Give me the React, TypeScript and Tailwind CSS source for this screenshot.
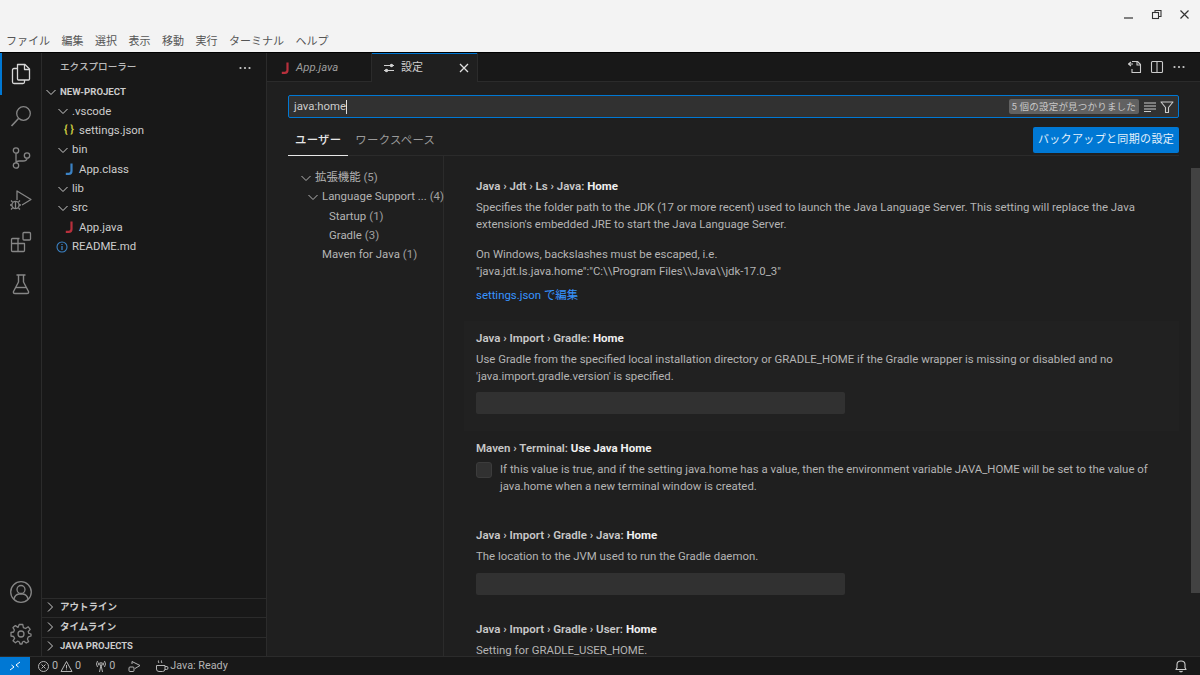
import React from "react";

const font = { fontFamily: '"Roboto","Noto Sans CJK JP",sans-serif' };

const Chevron = ({ open = true, className = "" }: { open?: boolean; className?: string }) => (
  <svg width="12" height="12" viewBox="0 0 12 12" fill="none" stroke="currentColor" strokeWidth="1" className={`shrink-0 ${className}`}>
    {open ? <path d="M1.5 4 L6 8.5 L10.5 4" /> : <path d="M4 1.5 L8.5 6 L4 10.5" />}
  </svg>
);

const JIcon = ({ color = "#b7303c" }: { color?: string }) => (
  <span className="inline-flex w-4 h-4 items-center justify-center shrink-0">
    <svg width="9" height="12" viewBox="0 0 9 12" fill="none" stroke={color} strokeWidth="2.2">
      <path d="M6.5 0.5 V8 Q6.5 10.8 3.8 10.8 H0.8" />
    </svg>
  </span>
);

const Row = ({ pad, icon, children }: { pad: string; icon?: React.ReactNode; children: React.ReactNode }) => (
  <div className={`flex items-center h-[19.4px] ${pad} text-[11.4px] text-[#cccccc]`}>
    {icon}
    <span>{children}</span>
  </div>
);

const Title = ({ pre, strong }: { pre: string; strong: string }) => (
  <div className="text-[11.5px] leading-[17px] font-semibold text-[#c8c8c8] whitespace-nowrap">
    {pre} <span className="text-[#f0f0f0] font-bold">{strong}</span>
  </div>
);

const Desc = ({ children }: { children: React.ReactNode }) => (
  <div className="text-[11.4px] leading-[17px] text-[#b4b4b4] whitespace-nowrap">{children}</div>
);

const TextInput = ({ mt }: { mt: string }) => <div className={`${mt} w-[369px] h-[22px] rounded-[2px] bg-[#313131]`} />;

const Section = ({ label }: { label: string }) => (
  <div className="flex items-center h-[19.5px] pb-[1px] border-t border-[#2b2b2b] pl-[2px] text-[9.5px] font-bold text-[#cccccc]">
    <Chevron open={false} className="mr-[4px]" />
    <span>{label}</span>
  </div>
);

export default function App() {
  return (
    <div style={font} className="w-[1200px] h-[675px] overflow-hidden flex flex-col bg-[#1f1f1f]">
      {/* Title bar */}
      <div className="h-[53px] shrink-0 bg-[#f3f3f3] border-b border-black flex flex-col justify-between">
        <div className="flex justify-end items-center gap-[15px] pt-[8px] pr-[9px] text-[#333]">
          <svg width="13" height="13" viewBox="0 0 13 13" stroke="currentColor" fill="none"><path d="M2 10 H11" strokeWidth="1.2" /></svg>
          <svg width="13" height="13" viewBox="0 0 13 13" stroke="currentColor" fill="none" strokeWidth="1.1"><rect x="2.5" y="4.5" width="6" height="6" /><path d="M5 4 V2.5 H11 V8.5 H9" /></svg>
          <svg width="13" height="13" viewBox="0 0 13 13" stroke="currentColor" fill="none" strokeWidth="1.2"><path d="M2.5 2.5 L10.5 10.5 M10.5 2.5 L2.5 10.5" /></svg>
        </div>
        <div className="flex items-center gap-[11.5px] pl-[6px] pb-[2px] text-[11px] leading-[16px] text-[#555]">
          <span>ファイル</span><span>編集</span><span>選択</span><span>表示</span><span>移動</span><span>実行</span><span>ターミナル</span><span>ヘルプ</span>
        </div>
      </div>

      <div className="flex-1 min-h-0 flex">
        {/* Activity bar */}
        <div className="w-[42px] shrink-0 bg-[#181818] border-r border-[#2b2b2b] flex flex-col items-center text-[#868686]">
          <div className="relative w-full h-[42px] flex items-center justify-center text-[#d7d7d7]">
            <div className="absolute left-0 top-0 bottom-0 w-[2px] bg-[#0078d4]" />
            <svg width="24" height="24" viewBox="0 0 24 24" fill="none" stroke="currentColor" strokeWidth="1.3" strokeLinejoin="round">
              <path d="M8.5 2.5 H16 L20.5 7 V17 Q20.5 18 19.5 18 H9.5 Q8.5 18 8.5 17 Z" />
              <path d="M15.5 3 V7.5 H20" />
              <path d="M8.5 6.5 H5 Q3.5 6.5 3.5 8 V20 Q3.5 21.5 5 21.5 H14 Q15.5 21.5 15.5 20 V18" />
            </svg>
          </div>
          <div className="h-[42px] flex items-center justify-center">
            <svg width="24" height="24" viewBox="0 0 24 24" fill="none" stroke="currentColor" strokeWidth="1.3"><circle cx="14.5" cy="9.5" r="6.8" /><path d="M9.5 14.5 L2.5 22" strokeWidth="1.6" /></svg>
          </div>
          <div className="h-[42px] flex items-center justify-center">
            <svg width="24" height="24" viewBox="0 0 24 24" fill="none" stroke="currentColor" strokeWidth="1.3"><circle cx="7" cy="4.5" r="2.7" /><circle cx="7" cy="19.5" r="2.7" /><circle cx="18" cy="9.5" r="2.7" /><path d="M7 7.2 V16.8 M18 12.2 Q18 15 14 15 H10 Q7.5 15 7 17" /></svg>
          </div>
          <div className="h-[42px] flex items-center justify-center">
            <svg width="24" height="24" viewBox="0 0 24 24" fill="none" stroke="currentColor" strokeWidth="1.3" strokeLinejoin="round"><path d="M8 12 V3 L22 11.5 L13 17" /><circle cx="6.5" cy="17" r="3.6" /><path d="M6.5 13.5 V20.5 M3 17 H1 M12 17 H10 M3.5 14 L2 12.5 M9.5 14 L11 12.5 M3.5 20 L2 21.5 M9.5 20 L11 21.5" /></svg>
          </div>
          <div className="h-[42px] flex items-center justify-center">
            <svg width="24" height="24" viewBox="0 0 24 24" fill="none" stroke="currentColor" strokeWidth="1.3" strokeLinejoin="round"><path d="M10.5 8.5 H3.5 Q2.5 8.5 2.5 9.5 V20.5 Q2.5 21.5 3.5 21.5 H14.5 Q15.5 21.5 15.5 20.5 V13.5 H2.5 M9 13.5 V21.5" /><path d="M9 13.5 V9" /><rect x="14" y="2.5" width="7.5" height="7.5" rx="1" /></svg>
          </div>
          <div className="h-[42px] flex items-center justify-center">
            <svg width="24" height="24" viewBox="0 0 24 24" fill="none" stroke="currentColor" strokeWidth="1.4" strokeLinejoin="round"><path d="M7.5 3 H16.5 M9.5 3 V10 L4.5 19.5 Q4 21.5 6 21.5 H18 Q20 21.5 19.5 19.5 L14.5 10 V3" /><path d="M7 15.5 H17" /></svg>
          </div>
          <div className="flex-1" />
          <div className="h-[42px] flex items-center justify-center">
            <svg width="24" height="24" viewBox="0 0 24 24" fill="none" stroke="currentColor" strokeWidth="1.3"><circle cx="12" cy="12" r="10.3" /><circle cx="12" cy="9.5" r="4" /><path d="M5 19 Q6 14.5 10 14 H14 Q18 14.5 19 19" /></svg>
          </div>
          <div className="h-[42px] flex items-center justify-center">
            <svg width="24" height="24" viewBox="0 0 24 24" fill="none" stroke="currentColor" strokeWidth="1.3" strokeLinejoin="round"><circle cx="12" cy="12" r="3" /><path d="M10.2 2.5 H13.8 L14.4 5.6 L16.6 6.5 L19.2 4.8 L21.2 7.3 L19.2 9.6 L19.9 11.4 L22 12 V14 L19.4 14.8 L18.4 17 L19.6 19.6 L17.2 21 L15 19.2 L13.5 20 L13 22 H11 L10.4 20 L8.6 19.2 L6.4 20.8 L4 18.8 L5.6 16.4 L4.6 14.5 L2 14 V10.5 L4.6 10 L5.4 8 L4 5.6 L6.4 3.6 L9 5.4 Z" /></svg>
          </div>
          <div className="h-[1px]" />
        </div>

        {/* Sidebar */}
        <div className="w-[225px] shrink-0 bg-[#181818] border-r border-[#2b2b2b] flex flex-col">
          <div className="h-[29px] shrink-0 flex items-center justify-between pl-[18px] pr-[14px] text-[9.6px] font-medium text-[#bbbbbb]">
            <span>エクスプローラー</span>
            <svg width="14" height="14" viewBox="0 0 14 14" fill="#cccccc"><circle cx="2.5" cy="7" r="1.1" /><circle cx="7" cy="7" r="1.1" /><circle cx="11.5" cy="7" r="1.1" /></svg>
          </div>
          <div className="flex-1 min-h-0 text-[#cccccc]">
            <div className="flex items-center h-[19.4px] pl-[3px] text-[9.6px] font-bold"><Chevron className="mr-[3px]" /><span>NEW-PROJECT</span></div>
            <Row pad="pl-[15px]" icon={<Chevron className="mr-[3px]" />}>.vscode</Row>
            <Row pad="pl-[19px]" icon={<span className="w-[16px] h-4 mr-[2px] flex items-center justify-center text-[11px] font-bold text-[#cbcb41] whitespace-pre">{"{ }"}</span>}>settings.json</Row>
            <Row pad="pl-[15px]" icon={<Chevron className="mr-[3px]" />}>bin</Row>
            <Row pad="pl-[19px]" icon={<span className="mr-[2px] flex"><JIcon color="#3b82c4" /></span>}>App.class</Row>
            <Row pad="pl-[15px]" icon={<Chevron className="mr-[3px]" />}>lib</Row>
            <Row pad="pl-[15px]" icon={<Chevron className="mr-[3px]" />}>src</Row>
            <Row pad="pl-[19px]" icon={<span className="mr-[2px] flex"><JIcon /></span>}>App.java</Row>
            <Row pad="pl-[13px]" icon={
              <svg width="12" height="12" viewBox="0 0 12 12" fill="none" stroke="#3b82c4" className="mr-[4px] ml-[1px] shrink-0"><circle cx="6" cy="6" r="5" strokeWidth="1.1" /><path d="M6 5 V9 M6 3 V4" strokeWidth="1.3" /></svg>
            }>README.md</Row>
          </div>
          <Section label="アウトライン" />
          <Section label="タイムライン" />
          <Section label="JAVA PROJECTS" />
        </div>

        {/* Editor */}
        <div className="flex-1 min-w-0 flex flex-col bg-[#1f1f1f]">
          {/* Tabs */}
          <div className="h-[29px] shrink-0 bg-[#181818] flex items-stretch border-b border-[#2b2b2b]">
            <div className="w-[105px] flex items-center pl-[10px] pt-[1px] gap-[3px] border-r border-[#2b2b2b] text-[11.4px] italic text-[#9d9d9d]">
              <JIcon />
              <span>App.java</span>
            </div>
            <div className="relative w-[106px] -mb-px flex items-center pl-[10px] border-r border-[#2b2b2b] bg-[#1f1f1f] text-[11px] text-[#d0d0d0]">
              <div className="absolute left-0 right-0 top-0 h-[1px] bg-[#0078d4]" />
              <svg width="14" height="14" viewBox="0 0 14 14" fill="none" stroke="currentColor" strokeWidth="1.1" className="mr-[5px]"><path d="M2 4.5 H8 M11 4.5 H12 M2 9.5 H3 M6 9.5 H12" /><circle cx="9.5" cy="4.5" r="1.1" fill="currentColor" /><circle cx="4.5" cy="9.5" r="1.1" fill="currentColor" /></svg>
              <span className="pt-[2px]">設定</span>
              <svg width="12" height="12" viewBox="0 0 12 12" fill="none" stroke="#e0e0e0" strokeWidth="1.3" className="absolute right-[7px]"><path d="M2 2 L10 10 M10 2 L2 10" /></svg>
            </div>
            <div className="flex-1 flex items-center justify-end gap-[6px] pr-[13px] text-[#cccccc]">
              <svg width="16" height="16" viewBox="0 0 16 16" fill="none" stroke="currentColor" strokeWidth="1.1" strokeLinejoin="round"><path d="M5 2.5 H10.5 L13.5 5.5 V13.5 H5 V10" /><path d="M10 2.5 V6 H13.5" /><path d="M6 5 L2 5 M4 3 L1.5 5 L4 7" /></svg>
              <svg width="16" height="16" viewBox="0 0 16 16" fill="none" stroke="currentColor" strokeWidth="1.1"><rect x="2.5" y="2.5" width="11" height="11" rx="1" /><path d="M8 2.5 V13.5" /></svg>
              <svg width="16" height="16" viewBox="0 0 16 16" fill="currentColor"><circle cx="3.5" cy="8" r="1.1" /><circle cx="8" cy="8" r="1.1" /><circle cx="12.5" cy="8" r="1.1" /></svg>
            </div>
          </div>

          {/* Settings */}
          <div className="flex-1 min-h-0 relative overflow-hidden">
            <div className="pl-[21px] pr-[21px] pt-[13px]">
              <div className="h-[23px] rounded-[2px] border border-[#0078d4] bg-[#313131] flex items-center pl-[5px] pr-[4px]">
                <span className="text-[11.4px] text-[#cccccc]">java:home</span>
                <span className="w-px h-[14px] bg-[#e0e0e0]" />
                <span className="ml-auto px-[3px] h-[15px] rounded-[2px] bg-[#616161] text-[9.5px] leading-[15px] tracking-[0.2px] text-[#c8c8c8]">5 個の設定が見つかりました</span>
                <svg width="14" height="14" viewBox="0 0 14 14" fill="none" stroke="#cccccc" strokeWidth="1.1" className="ml-[4px]"><path d="M1 3 H13 M1 6 H13 M1 9 H13 M1 11.5 H8" /></svg>
                <svg width="14" height="14" viewBox="0 0 14 14" fill="none" stroke="#cccccc" strokeWidth="1.1" strokeLinejoin="round" className="ml-[3px]"><path d="M1 2 H13 L8.5 7.5 V12.5 H5.5 V7.5 Z" /></svg>
              </div>
              <div className="mt-[6px] h-[32px] relative flex items-start justify-between border-b border-[#2b2b2b]">
                <div className="flex text-[11.4px] tracking-[0.25px] pt-[7px]">
                  <div className="px-[7px] h-[25px] -mb-px border-b border-[#e7e7e7] text-[#e7e7e7] font-medium leading-[18px]">ユーザー</div>
                  <div className="px-[7px] text-[#9a9a9a] leading-[18px]">ワークスペース</div>
                </div>
                <div className="h-[26px] w-[146px] mt-[3px] rounded-[2px] bg-[#0078d4] text-white/90 text-[11px] tracking-[0.35px] flex items-center justify-center">バックアップと同期の設定</div>
              </div>
            </div>

            <div className="flex">
              {/* TOC */}
              <div className="w-[177px] shrink-0 h-[520px] border-r border-[#2b2b2b] pt-[12px] text-[11.4px] text-[#b4b4b4]">
                <div className="flex items-center h-[19.3px] pl-[33px]"><Chevron className="mr-[3px]" /><span>拡張機能 <span className="text-[#a0a0a0]">(5)</span></span></div>
                <div className="flex items-center h-[19.3px] pl-[40px] whitespace-nowrap"><Chevron className="mr-[3px]" /><span>Language Support ... <span className="text-[#a0a0a0]">(4)</span></span></div>
                <div className="flex items-center h-[19.3px] pl-[62px]">Startup <span className="ml-[3px] text-[#a0a0a0]">(1)</span></div>
                <div className="flex items-center h-[19.3px] pl-[62px]">Gradle <span className="ml-[3px] text-[#a0a0a0]">(3)</span></div>
                <div className="flex items-center h-[19.3px] pl-[55px]">Maven for Java <span className="ml-[3px] text-[#a0a0a0]">(1)</span></div>
              </div>
              {/* Settings list */}
              <div className="flex-1 min-w-0 pl-[20px] pr-[21px] h-[520px] overflow-hidden">
                <div className="px-[12px] pt-[22px] h-[165px]">
                  <Title pre="Java › Jdt › Ls › Java:" strong="Home" />
                  <div className="mt-[4px]">
                    <Desc>Specifies the folder path to the JDK (17 or more recent) used to launch the Java Language Server. This setting will replace the Java<br />extension's embedded JRE to start the Java Language Server.</Desc>
                    <div className="mt-[13px]"><Desc>On Windows, backslashes must be escaped, i.e.<br />"java.jdt.ls.java.home":"C:\\Program Files\\Java\\jdk-17.0_3"</Desc></div>
                  </div>
                  <div className="mt-[7px] text-[11.4px] leading-[17px] text-[#3794ff]">settings.json で編集</div>
                </div>
                <div className="px-[12px] pt-[9px] h-[110px] bg-[#212121]">
                  <Title pre="Java › Import › Gradle:" strong="Home" />
                  <div className="mt-[4px]"><Desc>Use Gradle from the specified local installation directory or GRADLE_HOME if the Gradle wrapper is missing or disabled and no<br />'java.import.gradle.version' is specified.</Desc></div>
                  <TextInput mt="mt-[7px]" />
                </div>
                <div className="px-[12px] pt-[9px] h-[96px]">
                  <Title pre="Maven › Terminal:" strong="Use Java Home" />
                  <div className="mt-[4px] flex gap-[8px]">
                    <div className="w-[16px] h-[16px] rounded-[3px] bg-[#313131] border border-[#3c3c3c] shrink-0 mt-[1px]" />
                    <Desc>If this value is true, and if the setting java.home has a value, then the environment variable JAVA_HOME will be set to the value of<br />java.home when a new terminal window is created.</Desc>
                  </div>
                </div>
                <div className="px-[12px] h-[94px]">
                  <Title pre="Java › Import › Gradle › Java:" strong="Home" />
                  <div className="mt-[4px]"><Desc>The location to the JVM used to run the Gradle daemon.</Desc></div>
                  <TextInput mt="mt-[8px]" />
                </div>
                <div className="px-[12px]">
                  <Title pre="Java › Import › Gradle › User:" strong="Home" />
                  <div className="mt-[4px]"><Desc>Setting for GRADLE_USER_HOME.</Desc></div>
                </div>
              </div>
            </div>
            {/* Scrollbar */}
            <div className="absolute right-0 top-[86px] w-[9px] h-[425px] bg-[#424242]" />
          </div>
        </div>
      </div>

      {/* Status bar */}
      <div className="h-[19px] shrink-0 bg-[#181818] border-t border-[#2b2b2b] flex items-center text-[10.8px] text-[#b4b4b4]">
        <div className="w-[30px] h-full bg-[#0078d4] flex items-center justify-center text-white">
          <svg width="12" height="12" viewBox="0 0 12 12" fill="none" stroke="currentColor" strokeWidth="1"><path d="M1 10 L5 7 L2.5 5 M11 2 L7 5 L9.5 7" /></svg>
        </div>
        <div className="ml-[7px] flex items-center gap-[2px]">
          <svg width="13" height="13" viewBox="0 0 13 13" fill="none" stroke="currentColor"><circle cx="6.5" cy="6.5" r="5" /><path d="M4.5 4.5 L8.5 8.5 M8.5 4.5 L4.5 8.5" /></svg>
          <span>0</span>
          <svg width="13" height="13" viewBox="0 0 13 13" fill="none" stroke="currentColor" strokeLinejoin="round"><path d="M6.5 1.5 L12 11.5 H1 Z M6.5 5 V8.5 M6.5 9.5 V10.2" /></svg>
          <span>0</span>
        </div>
        <div className="ml-[13px] flex items-center gap-[1px]">
          <svg width="14" height="14" viewBox="0 0 14 14" fill="none" stroke="currentColor"><circle cx="7" cy="5" r="1.3" /><path d="M5.5 13 L7 6 L8.5 13 M3.5 2 Q1.5 5 3.5 8 M10.5 2 Q12.5 5 10.5 8 M5 3.5 Q4 5 5 6.5 M9 3.5 Q10 5 9 6.5" /></svg>
          <span>0</span>
        </div>
        <div className="ml-[12px]">
          <svg width="14" height="14" viewBox="0 0 14 14" fill="none" stroke="currentColor" strokeLinejoin="round"><path d="M5 5 V2.5 L13 6.5 L8 9.5" /><rect x="2" y="8" width="5" height="4.5" rx="1" /></svg>
        </div>
        <div className="ml-[14px] flex items-center gap-[1px]">
          <svg width="14" height="14" viewBox="0 0 14 14" fill="none" stroke="currentColor"><path d="M1.5 6.5 H10 V10 Q10 12.5 7.5 12.5 H4 Q1.5 12.5 1.5 10 Z M10 7.5 H12 Q13 7.5 13 9 Q13 10.5 11.5 10.5 H10 M3.5 1.5 Q3 3 4 4 M6.5 1.5 Q6 3 7 4" /></svg>
          <span>Java: Ready</span>
        </div>
        <div className="ml-auto pr-[12px] flex">
          <svg width="14" height="14" viewBox="0 0 14 14" fill="none" stroke="#cccccc" strokeWidth="1.1" strokeLinejoin="round"><path d="M2 10.5 H12 L11 8.5 V5.5 Q11 2 7 2 Q3 2 3 5.5 V8.5 Z M5.5 12 Q7 13.5 8.5 12" /></svg>
        </div>
      </div>
    </div>
  );
}
